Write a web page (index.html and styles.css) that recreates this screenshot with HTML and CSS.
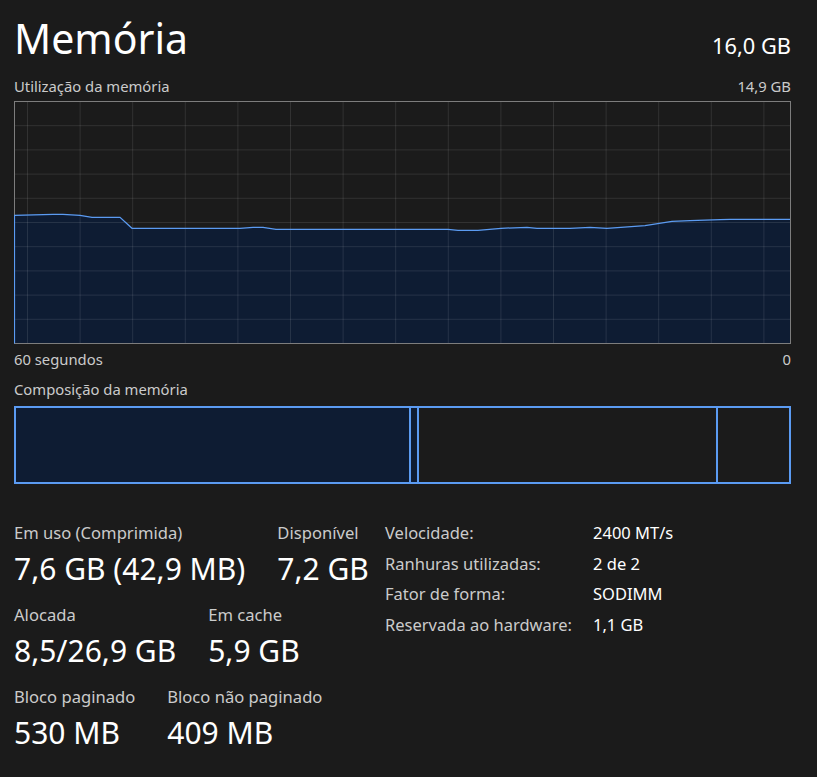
FILE: index.html
```html
<!DOCTYPE html>
<html lang="pt">
<head>
<meta charset="utf-8">
<title>Memória</title>
<link rel="stylesheet" href="styles.css">
</head>
<body>
<main class="page">
  <header class="header">
    <h1 class="title">Memória</h1>
    <div class="total">16,0 GB</div>
  </header>
  <div class="subrow">
    <span>Utilização da memória</span>
    <span>14,9 GB</span>
  </div>
  <div class="chart">
    <svg width="777" height="243" viewBox="0 0 777 243" xmlns="http://www.w3.org/2000/svg">
      <path class="fill" d="M0.5 114.3 L39 113.3 L49 113.3 L66 114.3 L78 116.3 L106 116.3 L118 127.3 L226 127.3 L239 126.3 L249 126.3 L262 128.3 L434 128.3 L444 129.3 L464 129.3 L487 127.3 L513 126.3 L523 127.3 L556 127.3 L576 126.3 L593 127.3 L631 124.7 L658 120.3 L676 119.7 L706 118.7 L716 118.3 L776.5 118.3 L776.5 242.5 L0.5 242.5 Z"/>
      <g class="grid">
        <path d="M0 24.7H777M0 48.9H777M0 73.1H777M0 97.3H777M0 121.5H777M0 145.7H777M0 169.9H777M0 194.1H777M0 218.3H777"/>
        <path d="M13.5 0V243M66.1 0V243M118.7 0V243M171.3 0V243M223.9 0V243M276.5 0V243M329.1 0V243M381.7 0V243M434.3 0V243M486.9 0V243M539.5 0V243M592.1 0V243M644.7 0V243M697.3 0V243M749.9 0V243"/>
      </g>
      <rect class="frame" x="0.5" y="0.5" width="776" height="242"/>
      <path class="line" d="M0.5 242.5 L0.5 114.3 L39 113.3 L49 113.3 L66 114.3 L78 116.3 L106 116.3 L118 127.3 L226 127.3 L239 126.3 L249 126.3 L262 128.3 L434 128.3 L444 129.3 L464 129.3 L487 127.3 L513 126.3 L523 127.3 L556 127.3 L576 126.3 L593 127.3 L631 124.7 L658 120.3 L676 119.7 L706 118.7 L716 118.3 L776 118.3"/>
    </svg>
  </div>
  <div class="subrow axis">
    <span>60 segundos</span>
    <span>0</span>
  </div>
  <div class="subrow comp-label">
    <span>Composição da memória</span>
  </div>
  <div class="compbar">
    <div class="seg seg-inuse"></div>
    <div class="seg seg-modified"></div>
    <div class="seg seg-standby"></div>
    <div class="seg seg-free"></div>
  </div>
  <section class="stats">
    <div class="stats-left">
      <div class="stat-row">
        <div class="stat"><div class="stat-label">Em uso (Comprimida)</div><div class="stat-value">7,6 GB (42,9 MB)</div></div>
        <div class="stat"><div class="stat-label">Disponível</div><div class="stat-value">7,2 GB</div></div>
      </div>
      <div class="stat-row">
        <div class="stat"><div class="stat-label">Alocada</div><div class="stat-value">8,5/26,9 GB</div></div>
        <div class="stat"><div class="stat-label">Em cache</div><div class="stat-value">5,9 GB</div></div>
      </div>
      <div class="stat-row">
        <div class="stat"><div class="stat-label">Bloco paginado</div><div class="stat-value">530 MB</div></div>
        <div class="stat"><div class="stat-label">Bloco não paginado</div><div class="stat-value">409 MB</div></div>
      </div>
    </div>
    <dl class="props">
      <dt>Velocidade:</dt><dd>2400 MT/s</dd>
      <dt>Ranhuras utilizadas:</dt><dd>2 de 2</dd>
      <dt>Fator de forma:</dt><dd>SODIMM</dd>
      <dt>Reservada ao hardware:</dt><dd>1,1 GB</dd>
    </dl>
  </section>
</main>
</body>
</html>
```

FILE: styles.css
```css
html, body {
  margin: 0;
  padding: 0;
  background: #1b1b1b;
}

body {
  font-family: "Noto Sans", "Open Sans", "DejaVu Sans", sans-serif;
  color: #ffffff;
}

.page {
  width: 777px;
  padding: 14px 0 0 14px;
}

.header {
  display: flex;
  justify-content: space-between;
  align-items: baseline;
  height: 48px;
}

.title {
  margin: 0;
  font-size: 41px;
  font-weight: 400;
  line-height: 48px;
  color: #ffffff;
}

.total {
  font-size: 21.8px;
  line-height: 48px;
  color: #ffffff;
}

.subrow {
  display: flex;
  justify-content: space-between;
  font-size: 14.8px;
  line-height: 18px;
  color: #cbcbcb;
  margin-top: 15px;
}

.chart {
  margin-top: 6px;
  height: 243px;
}

.chart svg {
  display: block;
}

.fill {
  fill: #0e1c33;
}

.grid path {
  stroke: rgba(255, 255, 255, 0.1);
  stroke-width: 1;
  fill: none;
}

.frame {
  fill: none;
  stroke: #7d7d7d;
  stroke-width: 1;
}

.line {
  fill: none;
  stroke: #5b9bf2;
  stroke-width: 1.2;
}

.axis {
  margin-top: 6px;
}

.comp-label {
  margin-top: 12px;
}

.compbar {
  margin-top: 8px;
  width: 773px;
  height: 74px;
  border: 2px solid #5b9bf2;
  display: flex;
}

.seg {
  height: 100%;
  box-sizing: border-box;
}

.seg-inuse {
  width: 395px;
  background: #0e1c33;
  border-right: 2px solid #5b9bf2;
}

.seg-modified {
  width: 8px;
  background: #0e1c33;
  border-right: 2px solid #5b9bf2;
}

.seg-standby {
  width: 299px;
  border-right: 2px solid #5b9bf2;
}

.seg-free {
  flex: 1;
}

.stats {
  margin-top: 34px;
  display: grid;
  grid-template-columns: 371px auto;
  align-items: start;
}

.stats-left {
  padding-top: 5px;
}

.stat-row {
  display: flex;
  gap: 32px;
  margin-bottom: 18.6px;
}

.stat-label {
  font-size: 16.6px;
  line-height: 20px;
  color: #cbcbcb;
}

.stat-value {
  margin-top: 7.5px;
  font-size: 30px;
  line-height: 36px;
  color: #ffffff;
}

.props {
  margin: 0;
  display: grid;
  grid-template-columns: 208px auto;
  font-size: 16.5px;
  line-height: 30.5px;
}

.props dt {
  color: #cbcbcb;
}

.props dd {
  margin: 0;
  color: #ffffff;
}
```
